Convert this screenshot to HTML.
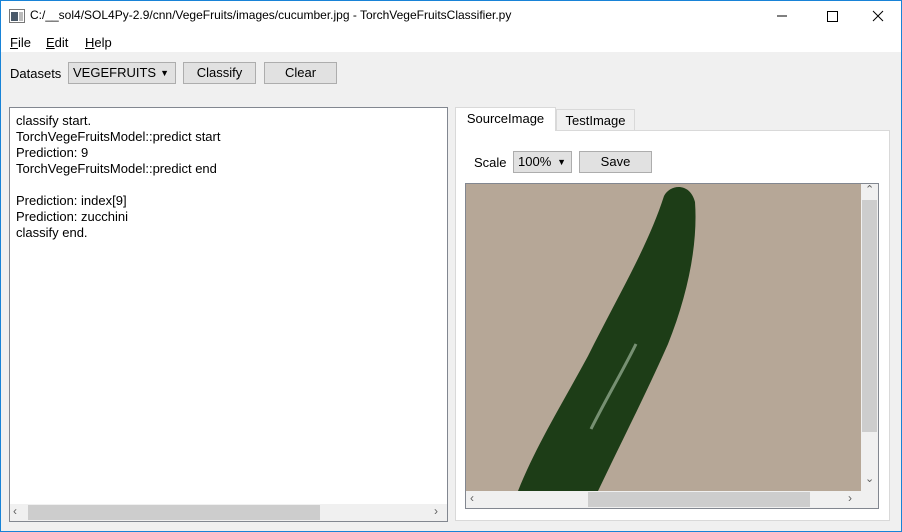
<!DOCTYPE html>
<html><head><style>
*{margin:0;padding:0;box-sizing:border-box}
body{width:902px;height:532px;background:#f0f0f0;font-family:"Liberation Sans",sans-serif;font-size:13px;color:#000;position:relative;overflow:hidden}
.a{position:absolute}
.btn{position:absolute;background:#e1e1e1;border:1px solid #adadad;text-align:center;line-height:20px;font-size:13px}
</style></head><body>
<div class="a" style="left:0;top:0;width:902px;height:532px;border:1px solid #1883d7;"></div>
<div class="a" style="left:1px;top:1px;width:900px;height:51px;background:#fff"></div>
<svg class="a" style="left:9px;top:9px" width="16" height="14"><rect x="0.5" y="0.5" width="15" height="13" fill="#fff" stroke="#777"/><rect x="2" y="3" width="7" height="9" fill="#4a5a6a"/><rect x="10" y="3" width="4" height="9" fill="#bbb"/></svg>
<div class="a" style="left:30px;top:8px;font-size:12px">C:/__sol4/SOL4Py-2.9/cnn/VegeFruits/images/cucumber.jpg - TorchVegeFruitsClassifier.py</div>
<svg class="a" style="left:770px;top:8px" width="120" height="16"><line x1="7" y1="8" x2="17" y2="8" stroke="#000"/><rect x="57.5" y="3.5" width="10" height="10" fill="none" stroke="#000"/><path d="M103 3 L113 13 M113 3 L103 13" stroke="#000"/></svg>
<div class="a" style="left:10px;top:35px"><u>F</u>ile</div>
<div class="a" style="left:46px;top:35px"><u>E</u>dit</div>
<div class="a" style="left:85px;top:35px"><u>H</u>elp</div>
<div class="a" style="left:10px;top:66px">Datasets</div>
<div class="btn" style="left:68px;top:62px;width:108px;height:22px;text-align:left;padding-left:4px">VEGEFRUITS<span style="position:absolute;right:6px;top:0;font-size:9px">▼</span></div>
<div class="btn" style="left:183px;top:62px;width:73px;height:22px">Classify</div>
<div class="btn" style="left:264px;top:62px;width:73px;height:22px">Clear</div>
<div class="a" style="left:9px;top:107px;width:439px;height:415px;background:#fff;border:1px solid #828790"></div>
<div class="a" style="left:16px;top:113px;line-height:16px;font-size:13px">classify start.<br>TorchVegeFruitsModel::predict start<br>Prediction: 9<br>TorchVegeFruitsModel::predict end<br><br>Prediction: index[9]<br>Prediction: zucchini<br>classify end.</div>
<div class="a" style="left:10px;top:504px;width:437px;height:17px;background:#f0f0f0"></div>
<div class="a" style="left:28px;top:505px;width:292px;height:15px;background:#cdcdcd"></div>
<div class="a" style="left:13px;top:504px;font-size:12px;color:#606060">&lsaquo;</div>
<div class="a" style="left:434px;top:504px;font-size:12px;color:#606060">&rsaquo;</div>
<div class="a" style="left:455px;top:130px;width:435px;height:391px;background:#fff;border:1px solid #d9d9d9"></div>
<div class="a" style="left:455px;top:107px;width:101px;height:24px;background:#fff;border:1px solid #d9d9d9;border-bottom:none;text-align:center;line-height:22px">SourceImage</div>
<div class="a" style="left:556px;top:109px;width:79px;height:21px;background:#f0f0f0;border:1px solid #d9d9d9;border-bottom:none;text-align:center;line-height:21px">TestImage</div>
<div class="a" style="left:474px;top:155px">Scale</div>
<div class="btn" style="left:513px;top:151px;width:59px;height:22px;text-align:left;padding-left:4px">100%<span style="position:absolute;right:5px;top:0;font-size:9px">▼</span></div>
<div class="btn" style="left:579px;top:151px;width:73px;height:22px">Save</div>
<div class="a" style="left:465px;top:183px;width:414px;height:326px;border:1px solid #828790;background:#f0f0f0"></div>
<svg class="a" style="left:466px;top:184px" width="395" height="307">
<rect width="395" height="307" fill="#b6a797"/>
<path d="M198 12 C204 0 224 -2 229 18 C232 60 222 110 202 160 C182 205 162 245 145 280 L132 307 L52 307 C70 262 96 220 122 172 C152 112 182 62 198 12 Z" fill="#1d3d17"/>
<path d="M170 160 C155 190 140 215 125 245" stroke="#9cb39a" stroke-width="3" fill="none" opacity="0.7"/>
</svg>
<div class="a" style="left:861px;top:184px;width:17px;height:307px;background:#f0f0f0"></div>
<div class="a" style="left:862px;top:200px;width:15px;height:232px;background:#cdcdcd"></div>
<div class="a" style="left:466px;top:491px;width:395px;height:17px;background:#f0f0f0"></div>
<div class="a" style="left:588px;top:492px;width:222px;height:15px;background:#cdcdcd"></div>
<div class="a" style="left:865px;top:183px;font-size:11px;color:#606060">&#8963;</div>
<div class="a" style="left:865px;top:472px;font-size:11px;color:#606060">&#8964;</div>
<div class="a" style="left:470px;top:491px;font-size:12px;color:#606060">&lsaquo;</div>
<div class="a" style="left:848px;top:491px;font-size:12px;color:#606060">&rsaquo;</div>
</body></html>
